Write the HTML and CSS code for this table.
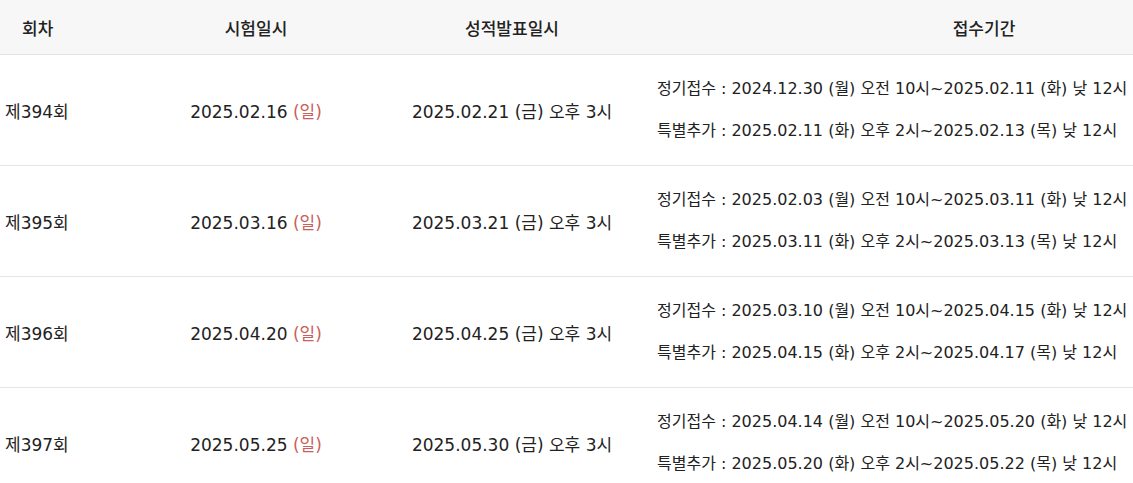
FILE: index.html
```html
<!DOCTYPE html>
<html lang="ko">
<head>
  <meta charset="UTF-8">
  <meta name="viewport" content="width=device-width, initial-scale=1.0">
  <title>시험일정</title>
  <link rel="stylesheet" href="styles.css">
</head>
<body>
  <div class="schedule-wrap">
    <table class="schedule">
      <colgroup>
        <col class="col-round">
        <col class="col-exam">
        <col class="col-result">
        <col class="col-apply">
      </colgroup>
      <thead>
        <tr>
          <th class="round">회차</th>
          <th>시험일시</th>
          <th>성적발표일시</th>
          <th>접수기간</th>
        </tr>
      </thead>
      <tbody>
        <tr>
          <td class="round">제394회</td>
          <td class="center">2025.02.16 <span class="sun">(일)</span></td>
          <td class="center">2025.02.21 (금) 오후 3시</td>
          <td class="apply">
            <p>정기접수 : 2024.12.30 (월) 오전 10시~2025.02.11 (화) 낮 12시</p>
            <p>특별추가 : 2025.02.11 (화) 오후 2시~2025.02.13 (목) 낮 12시</p>
          </td>
        </tr>
        <tr>
          <td class="round">제395회</td>
          <td class="center">2025.03.16 <span class="sun">(일)</span></td>
          <td class="center">2025.03.21 (금) 오후 3시</td>
          <td class="apply">
            <p>정기접수 : 2025.02.03 (월) 오전 10시~2025.03.11 (화) 낮 12시</p>
            <p>특별추가 : 2025.03.11 (화) 오후 2시~2025.03.13 (목) 낮 12시</p>
          </td>
        </tr>
        <tr>
          <td class="round">제396회</td>
          <td class="center">2025.04.20 <span class="sun">(일)</span></td>
          <td class="center">2025.04.25 (금) 오후 3시</td>
          <td class="apply">
            <p>정기접수 : 2025.03.10 (월) 오전 10시~2025.04.15 (화) 낮 12시</p>
            <p>특별추가 : 2025.04.15 (화) 오후 2시~2025.04.17 (목) 낮 12시</p>
          </td>
        </tr>
        <tr>
          <td class="round">제397회</td>
          <td class="center">2025.05.25 <span class="sun">(일)</span></td>
          <td class="center">2025.05.30 (금) 오후 3시</td>
          <td class="apply">
            <p>정기접수 : 2025.04.14 (월) 오전 10시~2025.05.20 (화) 낮 12시</p>
            <p>특별추가 : 2025.05.20 (화) 오후 2시~2025.05.22 (목) 낮 12시</p>
          </td>
        </tr>
      </tbody>
    </table>
  </div>
</body>
</html>
```

FILE: styles.css
```css
html, body {
  margin: 0;
  padding: 0;
  background: #fff;
}

body {
  font-family: "DejaVu Sans", "Noto Sans CJK KR", sans-serif;
  color: #222;
  overflow: hidden;
}

/* 표가 화면보다 넓어서 잘림 */
.schedule-wrap {
  width: 1133px;
  overflow: hidden;
}

.schedule {
  width: 1316px;
  border-collapse: collapse;
  table-layout: fixed;
  font-size: 17px;
}

.col-round { width: 140px; }
.col-exam { width: 232px; }
.col-result { width: 280px; }
.col-apply { width: 664px; }

/* 헤더 */
.schedule th {
  height: 54px;
  padding: 0;
  background: #f7f7f7;
  border-bottom: 1px solid #e2e2e2;
  font-weight: 500;
  text-align: center;
}

.schedule th.round {
  text-align: left;
  padding-left: 22px;
}

/* 본문 */
.schedule td {
  height: 110px;
  padding: 0;
  border-bottom: 1px solid #e6e6e6;
  white-space: nowrap;
}

.schedule td.round {
  padding-left: 5px;
}

.schedule td.center {
  text-align: center;
}

.schedule td.apply {
  padding-left: 5px;
  font-size: 16px;
}

.apply p {
  margin: 0;
  line-height: 42px;
}

.sun {
  color: #c8605b;
}
```
